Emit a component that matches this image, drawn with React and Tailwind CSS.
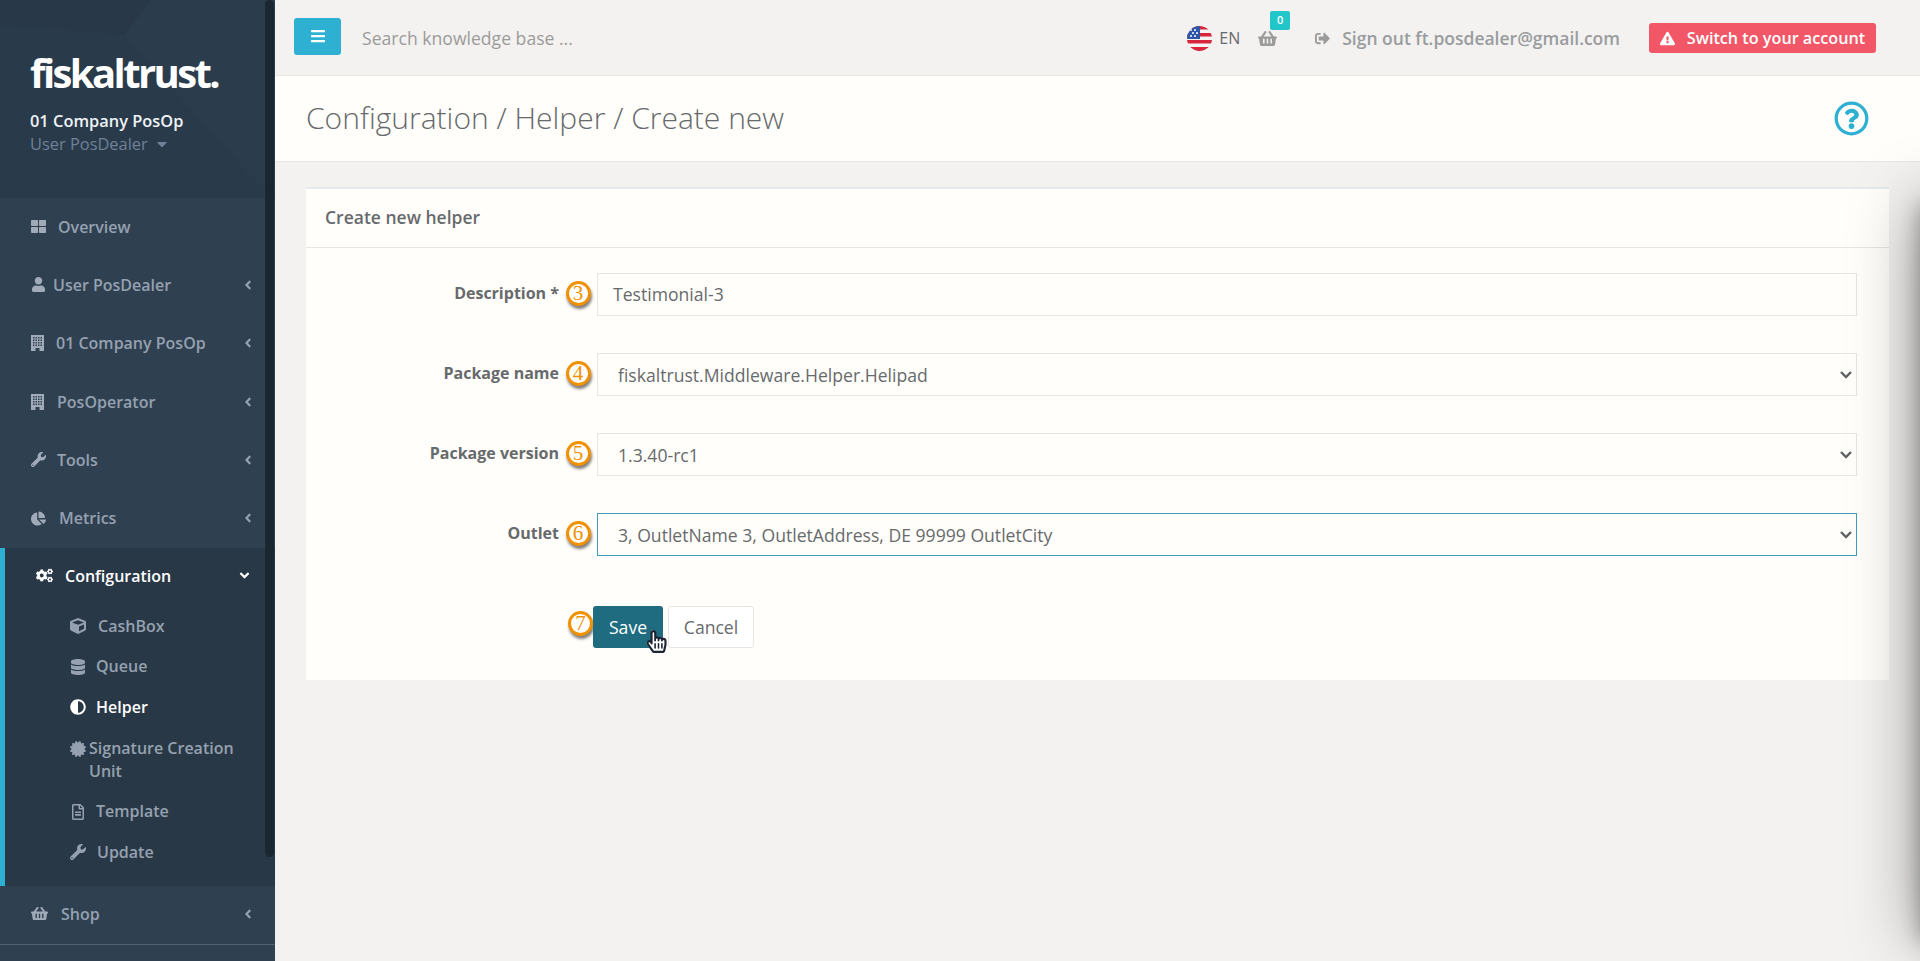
import React from 'react';
import {
  FaThLarge, FaUser, FaWrench, FaChartPie, FaCogs, FaCube, FaDatabase, FaAdjust,
  FaCertificate, FaRegFileAlt, FaShoppingBasket, FaBars, FaSignOutAlt, FaExclamationTriangle,
  FaRegQuestionCircle, FaAngleLeft, FaAngleDown, FaCaretDown, FaRegHandPointer, FaHandPointer,
} from 'react-icons/fa';

// solid building with window grid, the icon set's own one has a cut-out side
const BuildingIcon = ({ className }) => (
  <svg viewBox="0 0 13 16" className={className} fill="currentColor">
    <path
      fillRule="evenodd"
      d="M0 0h13v16H0zM2 2v1.5h1.5V2zM4.5 2v1.5H6V2zM7 2v1.5h1.5V2zM9.5 2v1.5H11V2zM2 4.5V6h1.5V4.5zM4.5 4.5V6H6V4.5zM7 4.5V6h1.5V4.5zM9.5 4.5V6H11V4.5zM2 7v1.5h1.5V7zM4.5 7v1.5H6V7zM7 7v1.5h1.5V7zM9.5 7v1.5H11V7zM2 9.5V11h1.5V9.5zM4.5 9.5V11H6V9.5zM7 9.5V11h1.5V9.5zM9.5 9.5V11H11V9.5zM4.5 13v3h4v-3z"
    />
  </svg>
);

const topItems = [
  { label: 'Overview', icon: FaThLarge, slot: 'w-[27px]' },
  { label: 'User PosDealer', icon: FaUser, slot: 'w-[22px]', arrow: true },
  { label: '01 Company PosOp', icon: BuildingIcon, slot: 'w-[25px]', arrow: true, tall: true },
  { label: 'PosOperator', icon: BuildingIcon, slot: 'w-[26px]', arrow: true, tall: true },
  { label: 'Tools', icon: FaWrench, slot: 'w-[26px]', arrow: true },
  { label: 'Metrics', icon: FaChartPie, slot: 'w-[28px]', arrow: true },
];

const subItems = [
  { label: 'CashBox', icon: FaCube, slot: 'w-[28px]' },
  { label: 'Queue', icon: FaDatabase, slot: 'w-[26px]' },
  { label: 'Helper', icon: FaAdjust, slot: 'w-[26px]', active: true },
  { label: 'Signature Creation Unit', icon: FaCertificate, slot: 'w-[19px]', tall: true },
  { label: 'Template', icon: FaRegFileAlt, slot: 'w-[26px]' },
  { label: 'Update', icon: FaWrench, slot: 'w-[27px]' },
];

const NavRow = ({ item, iconSize = 'h-[15px]', lift = 'pb-[1px]' }) => {
  const Icon = item.icon;
  return (
    <div className={`flex h-[58.33px] items-center pl-[31px] pr-[20px] text-[16px] font-semibold text-[#95a1b0] ${lift}`}>
      <span className={`flex shrink-0 ${item.slot}`}><Icon className={`${item.tall ? 'h-[16px]' : iconSize} w-auto text-[#a0aab8]`} /></span>
      <span>{item.label}</span>
      {item.arrow && <FaAngleLeft className="ml-auto h-[14px] w-auto" />}
    </div>
  );
};

const SubRow = ({ item }) => {
  const Icon = item.icon;
  return (
    <div className={`flex items-start pl-[65px] pr-[20px] text-[16px] font-semibold leading-[23px] ${item.active ? 'text-white' : 'text-[#95a1b0]'} ${item.tall ? 'h-[64px] pt-[10px]' : 'h-[40.5px] pt-[9px]'}`}>
      <span className={`flex h-[23px] shrink-0 items-center ${item.slot}`}><Icon className="h-[16px] w-auto" /></span>
      <span>{item.label}</span>
    </div>
  );
};

const Sidebar = () => (
  <aside className="relative flex w-[275px] shrink-0 flex-col overflow-hidden bg-[#2f4050]">
    <div className="relative h-[198px] shrink-0 overflow-hidden bg-[#293a4a] pl-[30px] pt-[45px]">
      <svg className="absolute inset-0 h-full w-full" viewBox="0 0 275 198">
        <polygon points="125,35 150,0 275,0 275,198 245,170" fill="#ffffff" opacity="0.012" />
        <polygon points="0,0 150,0 125,35 0,25" fill="#000000" opacity="0.02" />
      </svg>
      <div className="relative text-[40px] font-bold leading-[56px] tracking-[-2.6px] text-white">fiskaltrust.</div>
      <div className="relative mt-[8px] text-[16.4px] font-semibold leading-[23px] text-[#f0f3f6]">01 Company PosOp</div>
      <div className="relative flex items-center text-[16.4px] leading-[23px] text-[#6f8197]">
        User PosDealer
        <FaCaretDown className="ml-[6px] h-[16px] w-auto" />
      </div>
    </div>
    {topItems.map((item) => <NavRow key={item.label} item={item} />)}
    <div className="h-[338px] shrink-0 border-l-[5px] border-[#2eb0d3] bg-[#293846]">
      <div className="flex h-[58px] items-center pb-[2px] pl-[31px] pr-[23px] text-[16px] font-semibold text-white">
        <span className="flex w-[29px] shrink-0"><FaCogs className="h-[17px] w-auto" /></span>
        <span>Configuration</span>
        <FaAngleDown className="ml-auto h-[15px] w-auto" />
      </div>
      {subItems.map((item) => <SubRow key={item.label} item={item} />)}
    </div>
    <NavRow item={{ label: 'Shop', icon: FaShoppingBasket, slot: 'w-[30px]', arrow: true }} iconSize="h-[17px]" lift="pb-[3px]" />
    <div className="h-px shrink-0 bg-[#526270]" />
    <div className="absolute left-[265px] top-0 h-[857px] w-[9px] rounded-[5px] bg-[#1b2730]" />
  </aside>
);

const FlagUs = () => (
  <svg width="25" height="25" viewBox="0 0 25 25" className="shrink-0">
    <defs>
      <clipPath id="flagClip"><circle cx="12.5" cy="12.5" r="12.5" /></clipPath>
    </defs>
    <g clipPath="url(#flagClip)">
      <rect width="25" height="25" fill="#f4f4f4" />
      <rect y="0" width="25" height="3.5" fill="#d8263c" />
      <rect y="7" width="25" height="3.5" fill="#d8263c" />
      <rect y="14" width="25" height="3.5" fill="#d8263c" />
      <rect y="21" width="25" height="4" fill="#d8263c" />
      <rect width="13" height="13" fill="#2f56a6" />
      <circle cx="4" cy="4" r="1" fill="#fff" />
      <circle cx="8" cy="4" r="1" fill="#fff" />
      <circle cx="6" cy="7" r="1" fill="#fff" />
      <circle cx="10" cy="7" r="1" fill="#fff" />
      <circle cx="4" cy="10" r="1" fill="#fff" />
      <circle cx="8" cy="10" r="1" fill="#fff" />
    </g>
  </svg>
);

const TopBar = () => (
  <header className="flex h-[76px] shrink-0 items-center border-b border-[#e7e6e3] pb-[3px] pl-[19px] pr-[44px]">
    <button className="flex h-[37px] w-[47px] items-center justify-center rounded-[3px] bg-[#2eb0d3] text-white">
      <FaBars className="h-[16px] w-[16px]" />
    </button>
    <span className="ml-[21px] mt-[5px] text-[17.6px] text-[#9b9b9b]">Search knowledge base ...</span>
    <div className="ml-auto mt-[4px] flex items-center">
      <FlagUs />
      <span className="ml-[7px] text-[16px] text-[#676a6c]">EN</span>
      <div className="relative ml-[18px]">
        <FaShoppingBasket className="h-[19px] w-auto text-[#9b9b9b]" />
        <span className="absolute left-[12px] top-[-18px] flex h-[19px] w-[20px] items-center justify-center rounded-[2px] bg-[#23c6c8] text-[11px] font-semibold text-white">0</span>
      </div>
      <FaSignOutAlt className="ml-[38px] h-[15px] w-auto text-[#9b9b9b]" />
      <span className="ml-[12px] text-[17.5px] font-semibold text-[#999c9e]">Sign out ft.posdealer@gmail.com</span>
      <button className="ml-[29px] flex h-[30px] w-[227px] items-center justify-center gap-[12px] rounded-[3px] bg-[#f25767] text-[16.2px] font-semibold text-white">
        <FaExclamationTriangle className="h-[15px] w-auto" />
        Switch to your account
      </button>
    </div>
  </header>
);

const Badge = ({ n }) => (
  <span className="flex h-[25px] w-[25px] shrink-0 items-center justify-center rounded-full border-[3px] border-[#f29100] bg-white font-['Liberation_Serif',serif] text-[21px] leading-none text-[#f29100] shadow-[1px_3px_3px_rgba(0,0,0,0.5)]">
    {n}
  </span>
);

const FormRow = ({ label, n, children }) => (
  <div className="mb-[37px] flex h-[43px]">
    <label className="w-[253px] shrink-0 pt-[6px] text-right text-[16px] font-bold leading-[28px] text-[#676a6c]">{label}</label>
    <div className="flex w-[38px] shrink-0 justify-center pt-[8px]"><Badge n={n} /></div>
    {children}
  </div>
);

const Field = ({ value, focused }) => (
  <div className="relative mr-[32px] min-w-0 flex-1">
    <select
      defaultValue={value}
      className={`h-[43px] w-full appearance-none border bg-[#fffefb] pl-[20px] pr-[24px] pt-[1px] text-[17.6px] text-[#676a6c] outline-none ${focused ? 'border-[#3f9fb8]' : 'border-[#e5e6e7]'}`}
    >
      <option value={value}>{value}</option>
    </select>
    <svg viewBox="0 0 12 8" className="pointer-events-none absolute right-[5px] top-[18px] h-[8px] w-[12px] text-[#5f6264]" fill="none" stroke="currentColor" strokeWidth="2.4">
      <path d="M1 1l5 5 5-5" />
    </svg>
  </div>
);

const HelperForm = () => (
  <section className="mx-[31px] mt-[25px] border-t-[2px] border-[#e7eaec] bg-[#fffefb]">
    <h2 className="flex h-[59px] items-center border-b border-[#e7e6e3] pb-[2px] pl-[19px] text-[17.5px] font-semibold text-[#676a6c]">Create new helper</h2>
    <div className="h-[432px] pt-[25px]">
      <FormRow label="Description *" n="3">
        <input
          readOnly
          value="Testimonial-3"
          className="mr-[32px] h-[43px] min-w-0 flex-1 border border-[#e5e6e7] bg-[#fffefb] px-[15px] pb-[1px] text-[17.6px] text-[#676a6c] outline-none"
        />
      </FormRow>
      <FormRow label="Package name" n="4"><Field value="fiskaltrust.Middleware.Helper.Helipad" /></FormRow>
      <FormRow label="Package version" n="5"><Field value="1.3.40-rc1" /></FormRow>
      <FormRow label="Outlet" n="6"><Field value="3, OutletName 3, OutletAddress, DE 99999 OutletCity" focused /></FormRow>
      <div className="mt-[50px] flex items-start pl-[262px] text-[17.6px]">
        <span className="-mr-[1px] mt-[5px]"><Badge n="7" /></span>
        <div className="relative ml-[1px]">
          <button className="h-[42px] w-[70px] rounded-[3px] bg-[#1f6c80] text-white">Save</button>
          <span className="absolute left-[52px] top-[24px]">
            <FaHandPointer className="absolute h-[23px] w-auto text-white" />
            <FaRegHandPointer className="absolute h-[23px] w-auto text-[#1d2433]" />
          </span>
        </div>
        <button className="ml-[5px] h-[42px] w-[86px] rounded-[3px] border border-[#e7e6e3] bg-white text-[#676a6c]">Cancel</button>
      </div>
    </div>
  </section>
);

const App = () => (
  <div className="relative flex h-[961px] overflow-hidden bg-[#f3f2f0] font-['Open_Sans','Noto_Sans',sans-serif]">
    <Sidebar />
    <main className="relative min-w-0 flex-1">
      <TopBar />
      <div className="flex h-[86px] items-center justify-between border-b border-[#e7e6e3] bg-[#fffefb] pb-[3px] pl-[31px] pr-[51px]">
        <h1 className="text-[30px] font-light text-[#676a6c]">Configuration / Helper / Create new</h1>
        <FaRegQuestionCircle className="mt-[2px] h-[35px] w-[35px] text-[#2eb0d3]" />
      </div>
      <HelperForm />
    </main>
    <div className="absolute bottom-[20px] right-[-120px] top-[205px] w-[120px] shadow-[0_0_70px_0_rgba(0,0,0,0.4),0_0_20px_0_rgba(0,0,0,0.3)]" />
  </div>
);

export default App;
